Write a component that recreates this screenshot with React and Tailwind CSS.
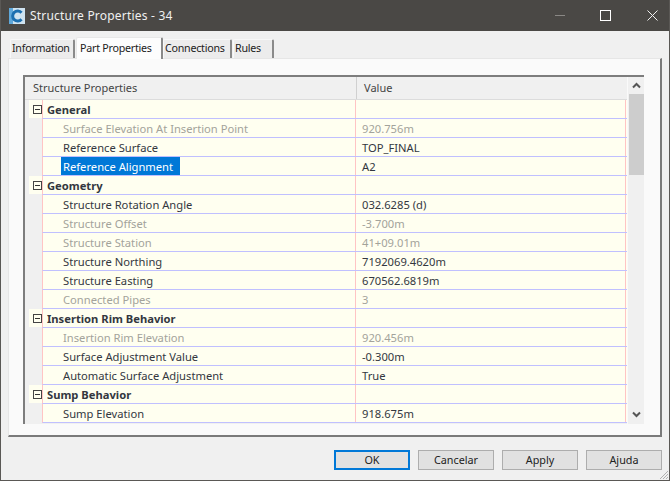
import React from "react";

const rows = [
  { g: "General" },
  { n: "Surface Elevation At Insertion Point", v: "920.756m", d: true },
  { n: "Reference Surface", v: "TOP_FINAL" },
  { n: "Reference Alignment", v: "A2", s: true },
  { g: "Geometry" },
  { n: "Structure Rotation Angle", v: "032.6285 (d)" },
  { n: "Structure Offset", v: "-3.700m", d: true },
  { n: "Structure Station", v: "41+09.01m", d: true },
  { n: "Structure Northing", v: "7192069.4620m" },
  { n: "Structure Easting", v: "670562.6819m" },
  { n: "Connected Pipes", v: "3", d: true },
  { g: "Insertion Rim Behavior" },
  { n: "Insertion Rim Elevation", v: "920.456m", d: true },
  { n: "Surface Adjustment Value", v: "-0.300m" },
  { n: "Automatic Surface Adjustment", v: "True" },
  { g: "Sump Behavior" },
  { n: "Sump Elevation", v: "918.675m" },
];

function Row({ r }) {
  const color = r.d ? "text-[#a3a39b]" : "text-[#33373f]";
  return (
    <div className="flex h-[19px] text-[11.2px] leading-[19px]">
      <div className="w-[17px] h-[18px] pl-[4px] shrink-0">
        {r.g && (
          <div className="w-[13px] h-[18px] pl-[4px] flex items-center bg-[#fffff0]">
            <div className="w-[9px] h-[9px] border border-[#444] flex items-center justify-center shrink-0">
              <div className="w-[5px] h-px bg-[#333]" />
            </div>
          </div>
        )}
      </div>
      <div className="flex-1 flex border-l border-[#ffc4c4] border-b border-b-[#c0c0ff] bg-[#fffff0] min-w-0">
        <div className={`w-[313px] shrink-0 border-r border-[#ffc4c4] whitespace-nowrap ${r.g ? "pl-[4px] font-bold text-[#33373f]" : "pl-[20px]"}`}>
          <span className={r.s ? "inline-block h-[18px] bg-[#0078d7] text-white w-[119px] -ml-[2px] pl-[2px]" : r.g ? "" : color}>
            {r.n || r.g}
          </span>
        </div>
        <div className={`flex-1 pl-[6px] border-r border-[#ffc4c4] mr-[1px] ${color}`}>{r.v}</div>
      </div>
    </div>
  );
}

function Tab({ label, active, w }) {
  return active ? (
    <div className={`${w} h-[22px] -mb-px relative z-10 bg-[#fdfdfd] rounded-t-[2px] border border-b-0 border-[#e8e8e8] border-r-2 border-r-[#8a8a8a] text-[10.7px] tracking-[-0.25px] leading-[20px] pl-[3px] text-[#222] whitespace-nowrap`}>
      {label}
    </div>
  ) : (
    <div className={`${w} h-[19px] bg-[#ececec] rounded-t-[2px] border-t border-l border-[#f8f8f8] border-r-2 border-r-[#8a8a8a] text-[10.7px] tracking-[-0.25px] leading-[17px] pl-[1px] text-[#222] whitespace-nowrap`}>
      {label}
    </div>
  );
}

function Btn({ label, primary }) {
  return (
    <div className={`w-[76px] h-[20px] flex items-center justify-center text-[10.8px] text-[#222] bg-[#e1e1e1] ${primary ? "border-2 border-[#0078d7]" : "border border-[#adadad]"}`}>
      {label}
    </div>
  );
}

export default function App() {
  return (
    <div className="relative w-[670px] h-[481px] flex flex-col bg-[#f0f0f0] border-x border-b border-[#5a5855] overflow-hidden font-['Noto_Sans','Open_Sans',sans-serif]">
      <div className="h-[31px] -mx-px pt-[1px] bg-[#4a4845] flex items-center shrink-0">
        <svg width="16" height="16" viewBox="0 0 16 16" className="ml-[9px]">
          <rect width="16" height="16" fill="#cfe3f0" />
          <rect x="0" y="0" width="4" height="16" fill="#5fa8da" />
          <path d="M12.5 4.8 A5 5 0 1 0 12.5 11.2" fill="none" stroke="#1b6fb0" strokeWidth="3" />
        </svg>
        <div className="ml-[5px] text-[12px] tracking-[0.2px] text-[#f0f0f0]">Structure Properties - 34</div>
        <div className="ml-auto -mt-[1px] flex items-center">
          <div className="w-[10px] h-px bg-[#8a8885] mr-[35px]" />
          <div className="w-[11px] h-[11px] border border-white mr-[36px]" />
          <svg width="11" height="11" viewBox="0 0 11 11" className="mr-[12px]">
            <path d="M0.5 0.5 L10.5 10.5 M10.5 0.5 L0.5 10.5" stroke="#f0f0f0" strokeWidth="1" />
          </svg>
        </div>
      </div>

      <div className="flex items-end h-[27px] pl-[9px] shrink-0">
        <Tab label="Information" w="w-[65px] mr-[1px]" />
        <Tab label="Part Properties" active w="w-[87px]" />
        <Tab label="Connections" w="w-[69px] mr-[1px]" />
        <Tab label="Rules" w="w-[41px]" />
      </div>

      <div className="mx-[7px] h-[379px] bg-[#fafafa] border-t border-[#e6e6e6] border-l border-l-[#e6e6e6] border-r-2 border-r-[#7a7a7a] border-b-2 border-b-[#7a7a7a] pl-[15px] pr-[16px] pt-[16px]">
        <div className="h-[349px] -ml-px flex border-t-2 border-l-2 border-[#7d7d7d] overflow-hidden">
          <div className="flex-1 min-w-0 bg-[#f0f0f0]">
            <div className="h-[23px] flex border-b border-[#dcdcdc] text-[11px] leading-[21px] text-[#444]">
              <div className="w-[332px] pl-[8px] border-r border-[#d0d0d0] shrink-0">Structure Properties</div>
              <div className="pl-[7px]">Value</div>
            </div>
            {rows.map((r, i) => (
              <Row key={i} r={r} />
            ))}
          </div>
          <div className="w-[16px] ml-[1px] bg-[#f0f0f0] shrink-0 flex flex-col items-center pt-[5px]">
            <svg width="9" height="7" viewBox="0 0 9 7" className="mb-[5px]">
              <path d="M1 5.5 L4.5 2 L8 5.5" fill="none" stroke="#555" strokeWidth="2" />
            </svg>
            <div className="w-[15px] h-[81px] bg-[#cdcdcd]" />
            <svg width="9" height="7" viewBox="0 0 9 7" className="mt-[236px]">
              <path d="M1 1.5 L4.5 5 L8 1.5" fill="none" stroke="#555" strokeWidth="2" />
            </svg>
          </div>
        </div>
      </div>

      <div className="flex justify-end gap-[8px] pr-[7px] pt-[13px]">
        <Btn label="OK" primary />
        <Btn label="Cancelar" />
        <Btn label="Apply" />
        <Btn label="Ajuda" />
      </div>

      <svg width="12" height="12" viewBox="0 0 12 12" className="absolute right-0 bottom-0">
        <path d="M11 3 L3 11 M11 6 L6 11 M11 9 L9 11" stroke="#b0b0b0" strokeWidth="1" />
      </svg>
    </div>
  );
}
